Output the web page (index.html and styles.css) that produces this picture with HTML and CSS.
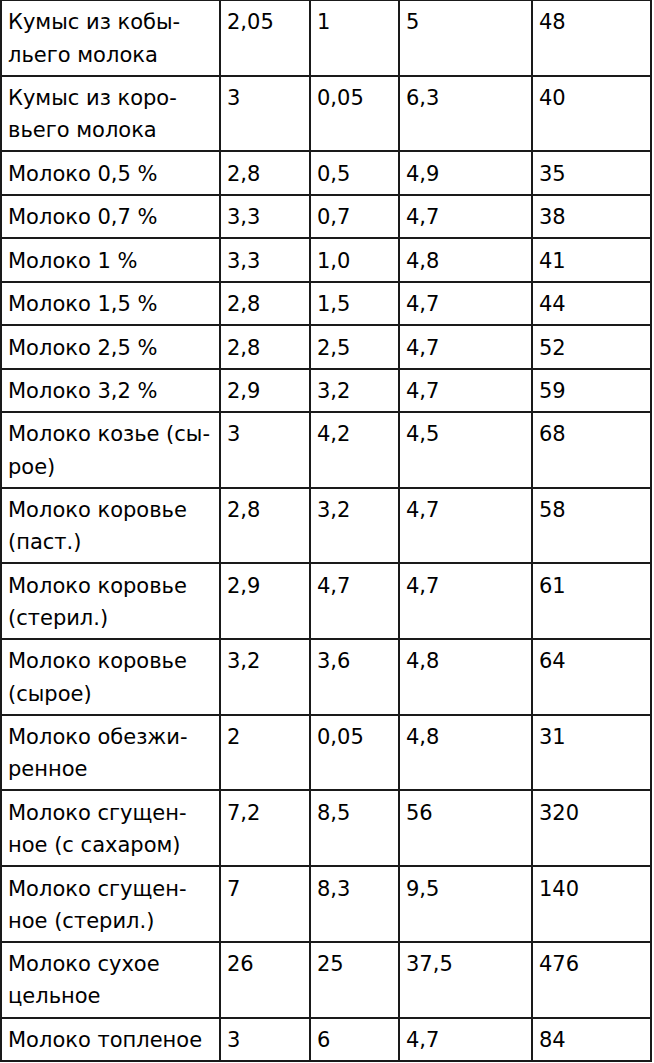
FILE: index.html
```html
<!DOCTYPE html>
<html lang="ru">
<head>
<meta charset="utf-8">
<title>Молочные продукты</title>
<link rel="stylesheet" href="styles.css">
</head>
<body>
<table class="nutrition">
<colgroup>
<col class="c-name"><col class="c-p"><col class="c-f"><col class="c-c"><col class="c-k">
</colgroup>
<tbody>
<tr><td>Кумыс из кобы-<br>льего молока</td><td>2,05</td><td>1</td><td>5</td><td>48</td></tr>
<tr><td>Кумыс из коро-<br>вьего молока</td><td>3</td><td>0,05</td><td>6,3</td><td>40</td></tr>
<tr><td>Молоко 0,5 %</td><td>2,8</td><td>0,5</td><td>4,9</td><td>35</td></tr>
<tr><td>Молоко 0,7 %</td><td>3,3</td><td>0,7</td><td>4,7</td><td>38</td></tr>
<tr><td>Молоко 1 %</td><td>3,3</td><td>1,0</td><td>4,8</td><td>41</td></tr>
<tr><td>Молоко 1,5 %</td><td>2,8</td><td>1,5</td><td>4,7</td><td>44</td></tr>
<tr><td>Молоко 2,5 %</td><td>2,8</td><td>2,5</td><td>4,7</td><td>52</td></tr>
<tr><td>Молоко 3,2 %</td><td>2,9</td><td>3,2</td><td>4,7</td><td>59</td></tr>
<tr><td>Молоко козье (сы-<br>рое)</td><td>3</td><td>4,2</td><td>4,5</td><td>68</td></tr>
<tr><td>Молоко коровье<br>(паст.)</td><td>2,8</td><td>3,2</td><td>4,7</td><td>58</td></tr>
<tr><td>Молоко коровье<br>(стерил.)</td><td>2,9</td><td>4,7</td><td>4,7</td><td>61</td></tr>
<tr><td>Молоко коровье<br>(сырое)</td><td>3,2</td><td>3,6</td><td>4,8</td><td>64</td></tr>
<tr><td>Молоко обезжи-<br>ренное</td><td>2</td><td>0,05</td><td>4,8</td><td>31</td></tr>
<tr><td>Молоко сгущен-<br>ное (с сахаром)</td><td>7,2</td><td>8,5</td><td>56</td><td>320</td></tr>
<tr><td>Молоко сгущен-<br>ное (стерил.)</td><td>7</td><td>8,3</td><td>9,5</td><td>140</td></tr>
<tr><td>Молоко сухое<br>цельное</td><td>26</td><td>25</td><td>37,5</td><td>476</td></tr>
<tr><td>Молоко топленое</td><td>3</td><td>6</td><td>4,7</td><td>84</td></tr>
</tbody>
</table>
</body>
</html>
```

FILE: styles.css
```css
html, body {
  margin: 0;
  padding: 0;
  background: #ffffff;
}

.nutrition {
  border-collapse: collapse;
  table-layout: fixed;
  width: 652px;
  margin-top: -1px;
  font-family: "DejaVu Sans", Verdana, sans-serif;
  font-size: 21px;
  line-height: 32.25px;
  color: #000000;
}

.c-name { width: 219px; }
.c-p { width: 90px; }
.c-f { width: 89px; }
.c-c { width: 133px; }
.c-k { width: 119px; }

.nutrition td {
  border: 2px solid #1a1a1a;
  padding: 5.4px 6px 3.8px 6px;
  vertical-align: top;
  text-align: left;
  white-space: nowrap;
}
```
